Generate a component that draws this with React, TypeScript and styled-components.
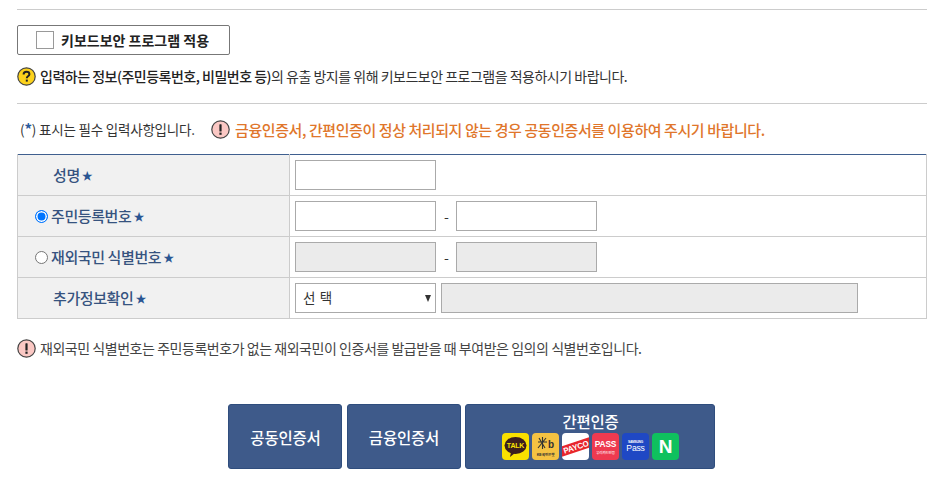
import React from "react";
import styled, { createGlobalStyle } from "styled-components";

const GlobalStyle = createGlobalStyle`
  html, body {
    margin: 0;
    padding: 0;
    background: #fff;
    font-family: "Noto Sans CJK KR", "Noto Sans", sans-serif;
    color: #333;
  }
`;

const Page = styled.div`
  width: 943px;
  height: 489px;
  box-sizing: border-box;
  padding: 9px 16px 0 17px;
  overflow: hidden;
`;

const Rule = styled.div`
  height: 1px;
  background: #ccc;
`;

const KeyboardButton = styled.div`
  box-sizing: border-box;
  width: 213px;
  height: 30px;
  margin-top: 15px;
  padding-left: 18px;
  display: flex;
  align-items: center;
  gap: 7px;
  border: 1px solid #777;
  border-radius: 2px;
  font-size: 14px;
  font-weight: 700;
  color: #222;
`;

const CheckBox = styled.span`
  box-sizing: border-box;
  width: 18px;
  height: 18px;
  border: 1px solid #999;
  background: #fff;
`;

const HelpLine = styled.div`
  display: flex;
  align-items: center;
  gap: 4px;
  height: 20px;
  margin-top: 11px;
  margin-bottom: 17px;
  font-size: 14px;
  letter-spacing: -0.5px;
  color: #333;
  b {
    font-weight: 500;
    color: #222;
  }
`;

const NoteRow = styled.div`
  display: flex;
  align-items: center;
  height: 20px;
  margin-top: 15px;
  margin-bottom: 15px;
  padding-left: 3px;
`;

const RequiredNote = styled.span`
  width: 191px;
  font-size: 13.5px;
  letter-spacing: -0.2px;
  color: #333;
  i {
    font-style: normal;
    font-weight: 700;
    font-size: 15px;
    line-height: 0;
    color: #2a5a9c;
  }
`;

const Warning = styled.span`
  display: flex;
  align-items: center;
  gap: 5px;
  font-size: 15px;
  font-weight: 500;
  letter-spacing: -0.42px;
  color: #e0762b;
`;

const FormTable = styled.table`
  width: 910px;
  table-layout: fixed;
  border-collapse: collapse;
  border-top: 1px solid #3f5f8f;
`;

const Row = styled.tr`
  height: 41px;
`;

const LabelCell = styled.th<{ $indent: number }>`
  box-sizing: border-box;
  width: 272px;
  padding: 0 0 2px ${(p) => p.$indent}px;
  background: #f1f1f1;
  border: 1px solid #ccc;
  border-top: none;
  text-align: left;
  font-size: 15px;
  font-weight: 500;
  letter-spacing: -0.4px;
  color: #36537f;
`;

const Label = styled.span`
  display: flex;
  align-items: center;
  gap: 2px;
`;

const Star = styled.span`
  font-size: 11px;
  line-height: 1;
  margin-top: 2px;
  color: #2a5592;
`;

const Radio = styled.span<{ $on?: boolean }>`
  box-sizing: border-box;
  width: 13px;
  height: 13px;
  margin-top: 2px;
  margin-right: 1px;
  border-radius: 50%;
  border: 1px solid ${(p) => (p.$on ? "#0075ff" : "#767676")};
  background: ${(p) => (p.$on ? "#0075ff" : "#fff")};
  box-shadow: ${(p) => (p.$on ? "inset 0 0 0 1.5px #fff" : "none")};
`;

const ValueCell = styled.td`
  padding: 0 0 0 5px;
  border: 1px solid #ccc;
  border-top: none;
`;

const Fields = styled.div`
  display: flex;
  align-items: center;
`;

const Field = styled.span<{ $off?: boolean; $width?: number }>`
  box-sizing: border-box;
  display: block;
  width: ${(p) => p.$width ?? 141}px;
  height: 30px;
  border: 1px solid #aaa;
  background: ${(p) => (p.$off ? "#ebebeb" : "#fff")};
`;

const Dash = styled.span`
  width: 20px;
  padding-left: 1px;
  box-sizing: border-box;
  text-align: center;
  font-size: 14px;
  color: #333;
`;

const SelectBox = styled.span`
  box-sizing: border-box;
  width: 141px;
  height: 30px;
  margin-right: 5px;
  padding: 0 4px 3px 7px;
  display: flex;
  align-items: center;
  justify-content: space-between;
  border: 1px solid #aaa;
  background: #fff;
  font-size: 13.5px;
  letter-spacing: 0.6px;
  color: #333;
`;

const Caret = styled.span`
  width: 0;
  height: 0;
  margin-top: 3px;
  border-left: 3.5px solid transparent;
  border-right: 3.5px solid transparent;
  border-top: 7px solid #333;
`;

const FootNote = styled.div`
  display: flex;
  align-items: center;
  gap: 4px;
  height: 20px;
  margin-top: 19px;
  font-size: 14px;
  letter-spacing: -0.46px;
  color: #444;
`;

const Buttons = styled.div`
  display: flex;
  justify-content: center;
  gap: 4.5px;
  margin-top: 46px;
  padding-right: 1px;
`;

const AuthButton = styled.div<{ $width: number }>`
  box-sizing: border-box;
  width: ${(p) => p.$width}px;
  height: 65px;
  padding-left: 1px;
  display: flex;
  flex-direction: column;
  align-items: center;
  justify-content: center;
  border: 1px solid #2f4d7d;
  border-radius: 3px;
  background: #3e5a8a;
  color: #fff;
  font-size: 15.5px;
  font-weight: 500;
  letter-spacing: -0.2px;
`;

const EasyTitle = styled.span`
  line-height: 20px;
  margin-top: -3px;
`;

const Logos = styled.div`
  display: flex;
  gap: 3.2px;
  margin-top: 2px;
`;

const HelpIcon = () => (
  <svg width="19" height="19" viewBox="0 0 19 19">
    <circle cx="9.5" cy="9.5" r="8.7" fill="#fcd21c" stroke="#444" strokeWidth="1.2" />
    <path d="M6.6 7.4c0-1.7 1.3-2.6 2.9-2.6s2.9.9 2.9 2.4c0 2.1-2.6 2.1-2.6 4" fill="none" stroke="#222" strokeWidth="2" />
    <rect x="8.8" y="12.6" width="2" height="2" fill="#222" />
  </svg>
);

const AlertIcon = () => (
  <svg width="19" height="19" viewBox="0 0 19 19">
    <circle cx="9.5" cy="9.5" r="8.7" fill="#fbc8c4" stroke="#444" strokeWidth="1.2" />
    <rect x="8.4" y="4.2" width="2.2" height="7.4" rx="0.6" fill="#222" />
    <rect x="8.4" y="12.6" width="2.2" height="2.2" fill="#222" />
  </svg>
);

const TalkLogo = () => (
  <svg width="27" height="27" viewBox="0 0 27 27">
    <rect width="27" height="27" rx="4" fill="#fae100" />
    <ellipse cx="13.5" cy="12.5" rx="11" ry="8.5" fill="#3c1e1e" />
    <path d="M9 19l-1 5 5-4z" fill="#3c1e1e" />
    <text x="13.5" y="15" textAnchor="middle" fontSize="7" fontWeight="700" fill="#fae100" fontFamily="Liberation Sans">TALK</text>
  </svg>
);

const KbLogo = () => (
  <svg width="27" height="27" viewBox="0 0 27 27">
    <rect width="27" height="27" rx="4" fill="#f5c242" />
    <path d="M7 5l6 10M14 5l-8 10M6 9h9M10.5 4v12" stroke="#333" strokeWidth="1.1" />
    <text x="19" y="15" textAnchor="middle" fontSize="10" fontWeight="700" fill="#333" fontFamily="Liberation Sans">b</text>
    <text x="13.5" y="23" textAnchor="middle" fontSize="3.6" fontWeight="700" fill="#333" fontFamily="Noto Sans CJK KR">KB 국민은행</text>
  </svg>
);

const PaycoLogo = () => (
  <svg width="27" height="27" viewBox="0 0 27 27">
    <defs>
      <clipPath id="payco-clip">
        <rect width="27" height="27" rx="4" />
      </clipPath>
    </defs>
    <g clipPath="url(#payco-clip)">
      <rect width="27" height="27" fill="#fff" />
      <g transform="rotate(-18 13.5 14)">
        <rect x="-3" y="9" width="34" height="10" fill="#e8262c" />
        <text x="14" y="17" textAnchor="middle" fontSize="8" fontWeight="700" fill="#fff" fontFamily="Liberation Sans">PAYCO</text>
      </g>
    </g>
  </svg>
);

const PassLogo = () => (
  <svg width="27" height="27" viewBox="0 0 27 27">
    <rect width="27" height="27" rx="4" fill="#ee3a50" />
    <text x="13.5" y="14" textAnchor="middle" fontSize="8.4" fontWeight="700" fill="#fff" fontFamily="Liberation Sans">PASS</text>
    <text x="13.5" y="20.5" textAnchor="middle" fontSize="3.6" fill="#fff" fontFamily="Noto Sans CJK KR">우리카드인증</text>
  </svg>
);

const SamsungLogo = () => (
  <svg width="27" height="27" viewBox="0 0 27 27">
    <rect width="27" height="27" rx="4" fill="#1f48c4" />
    <text x="13.5" y="10" textAnchor="middle" fontSize="3.2" fontWeight="700" fill="#fff" fontFamily="Liberation Sans">SAMSUNG</text>
    <text x="13.5" y="18" textAnchor="middle" fontSize="8.6" fill="#fff" fontFamily="Liberation Sans">Pass</text>
  </svg>
);

const NaverLogo = () => (
  <svg width="27" height="27" viewBox="0 0 27 27">
    <rect width="27" height="27" rx="4" fill="#0fc15e" />
    <text x="13.5" y="20" textAnchor="middle" fontSize="19" fontWeight="700" fill="#fff" fontFamily="Liberation Sans">N</text>
  </svg>
);

const App = () => (
  <Page>
    <GlobalStyle />
    <Rule />
    <KeyboardButton>
      <CheckBox />
      키보드보안 프로그램 적용
    </KeyboardButton>
    <HelpLine>
      <HelpIcon />
      <span>
        <b>입력하는 정보(주민등록번호, 비밀번호 등)</b>의 유출 방지를 위해 키보드보안 프로그램을 적용하시기 바랍니다.
      </span>
    </HelpLine>
    <Rule />
    <NoteRow>
      <RequiredNote>
        (<i>*</i>) 표시는 필수 입력사항입니다.
      </RequiredNote>
      <Warning>
        <AlertIcon />
        금융인증서, 간편인증이 정상 처리되지 않는 경우 공동인증서를 이용하여 주시기 바랍니다.
      </Warning>
    </NoteRow>
    <FormTable>
      <tbody>
        <Row>
          <LabelCell $indent={35}>
            <Label>
              성명<Star>★</Star>
            </Label>
          </LabelCell>
          <ValueCell>
            <Field />
          </ValueCell>
        </Row>
        <Row>
          <LabelCell $indent={17}>
            <Label>
              <Radio $on />
              주민등록번호<Star>★</Star>
            </Label>
          </LabelCell>
          <ValueCell>
            <Fields>
              <Field />
              <Dash>-</Dash>
              <Field />
            </Fields>
          </ValueCell>
        </Row>
        <Row>
          <LabelCell $indent={17}>
            <Label>
              <Radio />
              재외국민 식별번호<Star>★</Star>
            </Label>
          </LabelCell>
          <ValueCell>
            <Fields>
              <Field $off />
              <Dash>-</Dash>
              <Field $off />
            </Fields>
          </ValueCell>
        </Row>
        <Row>
          <LabelCell $indent={35}>
            <Label>
              추가정보확인<Star>★</Star>
            </Label>
          </LabelCell>
          <ValueCell>
            <Fields>
              <SelectBox>
                선 택<Caret />
              </SelectBox>
              <Field $off $width={417} />
            </Fields>
          </ValueCell>
        </Row>
      </tbody>
    </FormTable>
    <FootNote>
      <AlertIcon />
      재외국민 식별번호는 주민등록번호가 없는 재외국민이 인증서를 발급받을 때 부여받은 임의의 식별번호입니다.
    </FootNote>
    <Buttons>
      <AuthButton $width={114}>공동인증서</AuthButton>
      <AuthButton $width={114}>금융인증서</AuthButton>
      <AuthButton $width={250}>
        <EasyTitle>간편인증</EasyTitle>
        <Logos>
          <TalkLogo />
          <KbLogo />
          <PaycoLogo />
          <PassLogo />
          <SamsungLogo />
          <NaverLogo />
        </Logos>
      </AuthButton>
    </Buttons>
  </Page>
);

export default App;
